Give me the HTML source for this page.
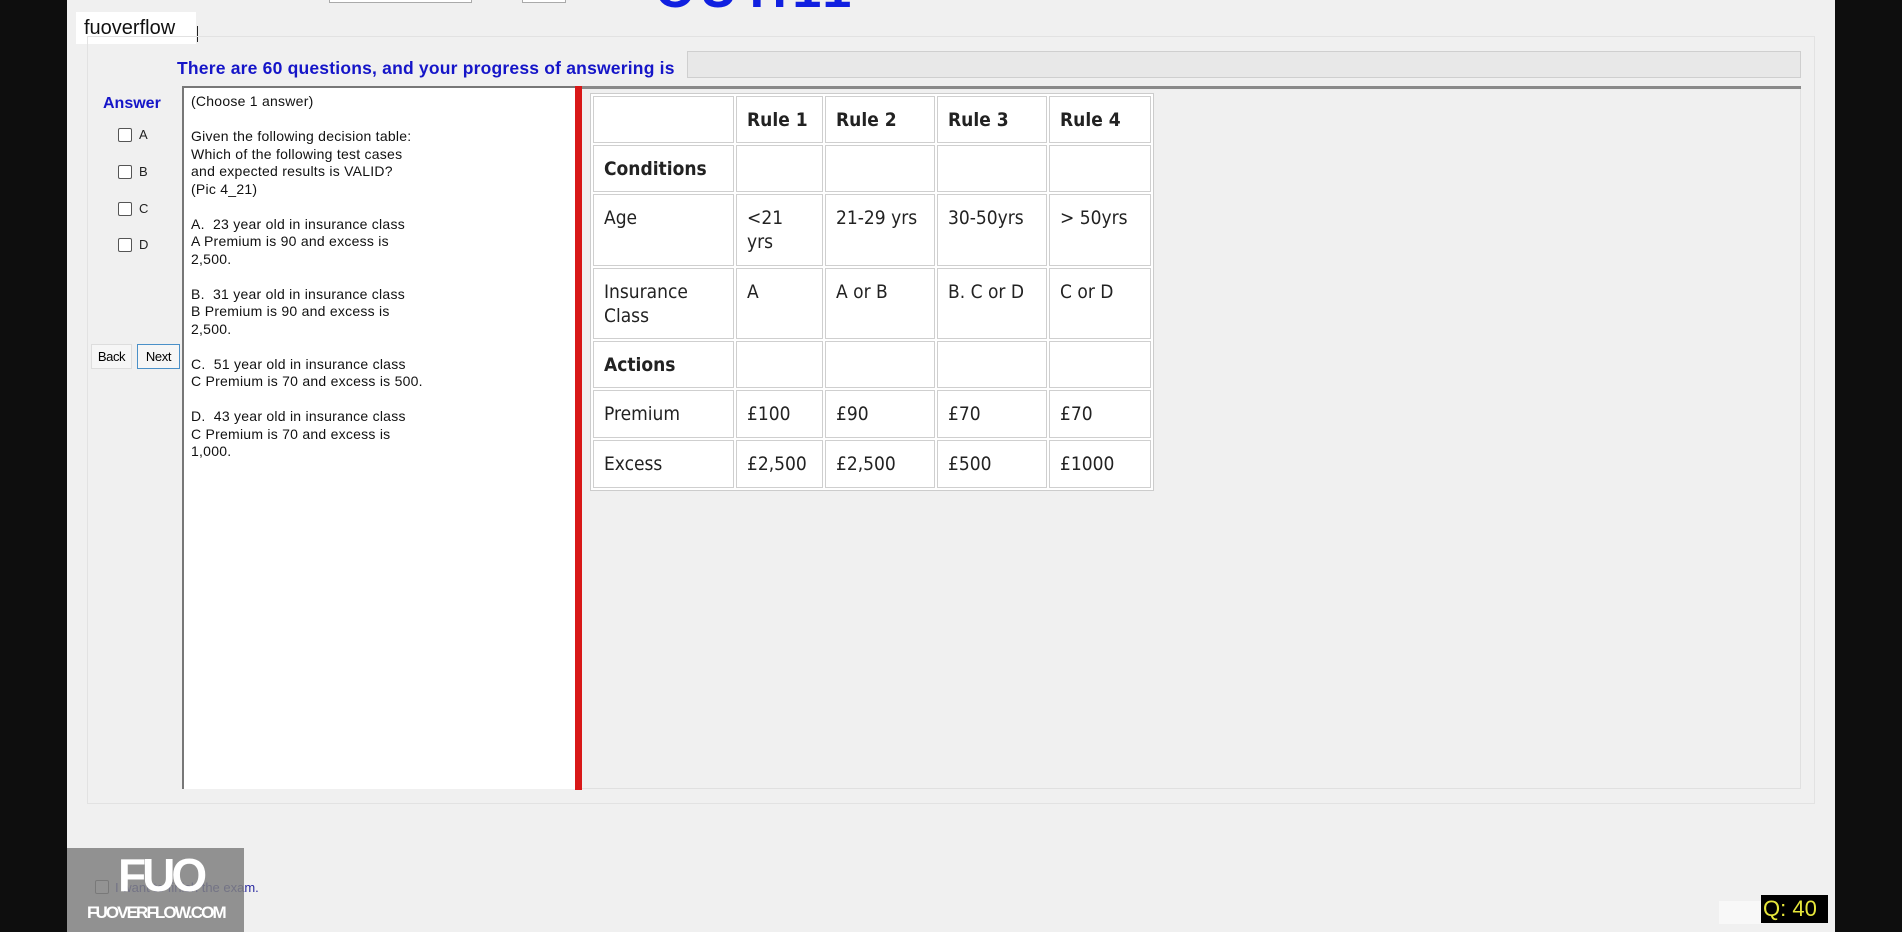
<!DOCTYPE html>
<html><head><meta charset="utf-8"><style>
*{margin:0;padding:0;box-sizing:border-box}
body{width:1902px;height:932px;overflow:hidden;background:#f0f0f0;font-family:"Liberation Sans",Arial,sans-serif;position:relative}
.abs{position:absolute}
.blk{background:#0e0e0e;top:0;height:932px}
.q{font-size:14px;color:#111;line-height:17.5px;letter-spacing:0.25px;white-space:pre}
table{border-collapse:separate;border-spacing:2px;background:#fff;border:1px solid #ccc}
td{border:1px solid #cfcfcf;font-size:19px;color:#222;vertical-align:top;padding:11px 10px 0 10px;line-height:24px;font-family:"DejaVu Sans Condensed","DejaVu Sans","Liberation Sans",sans-serif;font-stretch:condensed}
td.b{font-weight:bold}
.cb{width:14px;height:14px;border:1px solid #555;border-radius:2px;background:#fff}
</style></head><body>
<div class="abs blk" style="left:0;width:67px"></div>
<div class="abs blk" style="left:1835px;width:67px"></div>
<div class="abs" style="left:329px;top:-4px;width:143px;height:7px;border:1px solid #aaa;background:#fff"></div>
<div class="abs" style="left:522px;top:-4px;width:44px;height:7px;border:1px solid #aaa;background:#fff"></div>
<div class="abs" style="left:655px;top:-40px;font-size:52px;font-weight:bold;color:#1020e0;letter-spacing:4px">OUT:11</div>
<div class="abs" style="left:76px;top:12px;width:120px;height:32px;background:#fff;font-size:20px;padding:5px 0 0 8px;color:#111">fuoverflow</div>
<div class="abs" style="left:197px;top:26px;width:1px;height:16px;background:#222"></div>
<div class="abs" style="left:87px;top:36px;width:1728px;height:768px;border:1px solid #e2e2e2"></div>
<div class="abs" style="left:177px;top:58px;font-size:17.5px;font-weight:bold;color:#1515c8;letter-spacing:0.2px">There are 60 questions, and your progress of answering is</div>
<div class="abs" style="left:687px;top:51px;width:1114px;height:27px;border:1px solid #cfcfcf;background:#e8e8e8"></div>
<div class="abs" style="left:103px;top:95px;font-size:16px;font-weight:bold;color:#1515c8">Answer</div>
<div class="abs cb" style="left:118px;top:128px"></div><div class="abs" style="left:139px;top:127px;font-size:13px;color:#222">A</div>
<div class="abs cb" style="left:118px;top:165px"></div><div class="abs" style="left:139px;top:164px;font-size:13px;color:#222">B</div>
<div class="abs cb" style="left:118px;top:202px"></div><div class="abs" style="left:139px;top:201px;font-size:13px;color:#222">C</div>
<div class="abs cb" style="left:118px;top:238px"></div><div class="abs" style="left:139px;top:237px;font-size:13px;color:#222">D</div>
<div class="abs" style="left:91px;top:344px;width:41px;height:25px;border:1px solid #ddd;background:#f6f6f6;font-size:13px;text-align:center;line-height:23px;letter-spacing:-0.4px">Back</div>
<div class="abs" style="left:137px;top:344px;width:43px;height:25px;border:1px solid #4a90c8;background:#f6f6f6;font-size:13px;text-align:center;line-height:23px;letter-spacing:-0.4px">Next</div>
<div class="abs" style="left:182px;top:86px;width:393px;height:703px;background:#fff;border-left:2px solid #777;border-top:2px solid #777"></div>
<div class="abs q" style="left:191px;top:93px">(Choose 1 answer)

Given the following decision table:
Which of the following test cases
and expected results is VALID?
(Pic 4_21)

A.  23 year old in insurance class
A Premium is 90 and excess is
2,500.

B.  31 year old in insurance class
B Premium is 90 and excess is
2,500.

C.  51 year old in insurance class
C Premium is 70 and excess is 500.

D.  43 year old in insurance class
C Premium is 70 and excess is
1,000.</div>
<div class="abs" style="left:575px;top:86px;width:7px;height:704px;background:#d81818"></div>
<div class="abs" style="left:582px;top:86px;width:1219px;height:3px;background:#8a8a8a"></div>
<div class="abs" style="left:582px;top:89px;width:1219px;height:700px;border-right:1px solid #e0e0e0;border-bottom:1px solid #e0e0e0"></div>
<table class="abs" style="left:590px;top:93px;width:564px;height:398px">
<tr style="height:47px"><td style="width:141px"></td><td class="b" style="width:87px">Rule 1</td><td class="b" style="width:110px">Rule 2</td><td class="b" style="width:110px">Rule 3</td><td class="b">Rule 4</td></tr>
<tr style="height:47px"><td class="b">Conditions</td><td></td><td></td><td></td><td></td></tr>
<tr style="height:71px"><td>Age</td><td>&lt;21<br>yrs</td><td>21-29 yrs</td><td>30-50yrs</td><td>&gt; 50yrs</td></tr>
<tr style="height:71px"><td>Insurance<br>Class</td><td>A</td><td>A or B</td><td>B. C or D</td><td>C or D</td></tr>
<tr style="height:47px"><td class="b">Actions</td><td></td><td></td><td></td><td></td></tr>
<tr style="height:47px"><td>Premium</td><td>£100</td><td>£90</td><td>£70</td><td>£70</td></tr>
<tr style="height:48px"><td>Excess</td><td>£2,500</td><td>£2,500</td><td>£500</td><td>£1000</td></tr>
</table>
<div class="abs cb" style="left:95px;top:880px"></div>
<div class="abs" style="left:115px;top:880px;font-size:13px;color:#2a2aa0">I want to finish the exam.</div>
<div class="abs" style="left:67px;top:848px;width:177px;height:84px;background:rgba(128,128,128,0.85)"></div>
<div class="abs" style="left:118px;top:848px;font-size:46px;font-weight:bold;color:#fff;letter-spacing:-4px">FUO</div>
<div class="abs" style="left:87px;top:903px;font-size:17px;font-weight:bold;color:#fff;letter-spacing:-1.9px">FUOVERFLOW.COM</div>
<div class="abs" style="left:1719px;top:901px;width:44px;height:23px;background:#f8f8f8"></div>
<div class="abs" style="left:1761px;top:895px;width:67px;height:28px;background:#000;color:#e6e63a;font-size:22px;line-height:28px;padding-left:2px">Q: 40</div>
</body></html>
